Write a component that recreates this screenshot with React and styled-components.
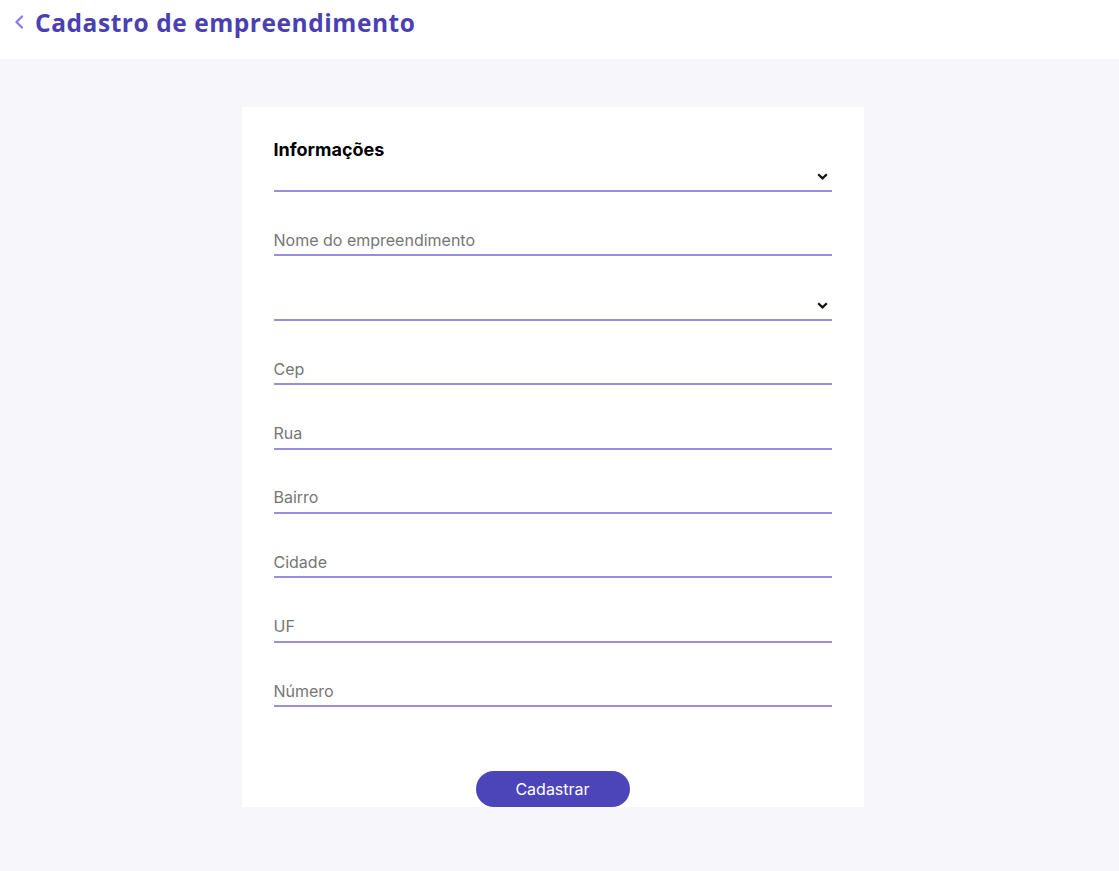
import React from 'react';
import styled, { createGlobalStyle } from 'styled-components';

const GlobalStyle = createGlobalStyle`
  * {
    box-sizing: border-box;
  }
  body {
    margin: 0;
    background: #f7f7fb;
    font-family: Inter, 'Liberation Sans', sans-serif;
  }
`;

const Page = styled.div`
  min-height: 100vh;
  display: flex;
  flex-direction: column;
`;

const Header = styled.header`
  height: 59px;
  background: #ffffff;
  display: flex;
  align-items: flex-start;
  padding: 8px 0 0 13px;
  gap: 8px;
`;

const BackButton = styled.button`
  border: none;
  background: none;
  padding: 0;
  margin-top: 6px;
  display: flex;
  cursor: pointer;
`;

const Title = styled.h1`
  margin: 0;
  font-family: 'Open Sans', sans-serif;
  font-weight: 700;
  font-size: 24.5px;
  letter-spacing: 0.55px;
  line-height: 30px;
  color: #4b40b1;
`;

const Main = styled.main`
  display: flex;
  justify-content: center;
  padding: 48px 14px 0 0;
`;

const Card = styled.form`
  width: 622px;
  background: #ffffff;
  padding: 32px 32px 0;
  display: flex;
  flex-direction: column;
`;

const Heading = styled.h2`
  margin: 0;
  font-size: 18px;
  line-height: 21px;
  font-weight: 700;
  color: #000000;
`;

const Fields = styled.div`
  display: flex;
  flex-direction: column;
  gap: 24.4px;
`;

const SelectWrap = styled.div`
  position: relative;
  height: ${(p) => p.$height}px;
`;

const Select = styled.select`
  appearance: none;
  width: 100%;
  height: 100%;
  border: none;
  border-bottom: 2px solid #9a8ddf;
  background: transparent;
  font: inherit;
  font-size: 16px;
  outline: none;
`;

const Chevron = styled.svg`
  position: absolute;
  right: 4px;
  bottom: 12px;
  pointer-events: none;
`;

const Input = styled.input`
  width: 100%;
  height: 40px;
  border: none;
  border-bottom: 2px solid #9a8ddf;
  padding: 9px 0 0;
  font-family: Inter, sans-serif;
  font-size: 16px;
  color: #222;
  outline: none;
  &::placeholder {
    color: #767676;
  }
`;

const Submit = styled.button`
  align-self: center;
  margin-top: 64px;
  width: 154px;
  height: 36px;
  border: none;
  border-radius: 18px;
  background: #4c44b9;
  color: #ffffff;
  font-family: Inter, sans-serif;
  font-size: 16px;
  cursor: pointer;
`;

const placeholders = ['Cep', 'Rua', 'Bairro', 'Cidade', 'UF', 'Número'];

function SelectField({ height }) {
  return (
    <SelectWrap $height={height}>
      <Select defaultValue=''>
        <option value='' />
      </Select>
      <Chevron width='11' height='7' viewBox='0 0 11 7'>
        <path d='M1.2 1.2 L5.5 5.4 L9.8 1.2' fill='none' stroke='#111' strokeWidth='2.2' />
      </Chevron>
    </SelectWrap>
  );
}

export default function App() {
  return (
    <Page>
      <GlobalStyle />
      <Header>
        <BackButton aria-label='Voltar'>
          <svg width='14' height='16' viewBox='0 0 14 16'>
            <path d='M9 2.5 L3.5 8 L9 13.5' fill='none' stroke='#8a7fe2' strokeWidth='2.4' strokeLinecap='round' strokeLinejoin='round' />
          </svg>
        </BackButton>
        <Title>Cadastro de empreendimento</Title>
      </Header>
      <Main>
        <Card onSubmit={(e) => e.preventDefault()}>
          <Heading>Informações</Heading>
          <Fields>
            <SelectField height={32} />
            <Input placeholder='Nome do empreendimento' />
            <SelectField height={40} />
            {placeholders.map((p) => (
              <Input key={p} placeholder={p} />
            ))}
          </Fields>
          <Submit type='submit'>Cadastrar</Submit>
        </Card>
      </Main>
    </Page>
  );
}
